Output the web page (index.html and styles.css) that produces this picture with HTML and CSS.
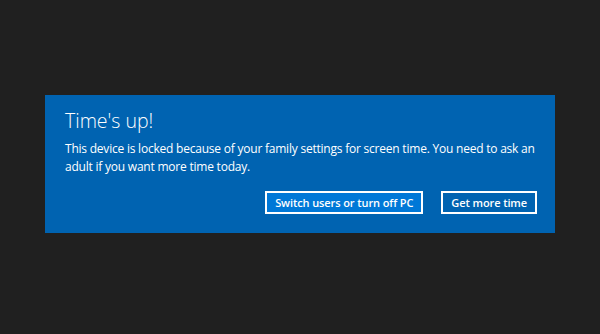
FILE: index.html
```html
<!DOCTYPE html>
<html lang="en">
<head>
    <meta charset="UTF-8">
    <title>Time's up</title>
    <link rel="stylesheet" href="styles.css">
</head>
<body>

<div class="dialog">
    <h1 class="dialog-title">Time's up!</h1>
    <p class="dialog-text">This device is locked because of your family settings for screen time. You need to ask an adult if you want more time today.</p>
    <div class="dialog-buttons">
        <button class="btn btn-focus">Switch users or turn off PC</button>
        <button class="btn">Get more time</button>
    </div>
</div>

</body>
</html>
```

FILE: styles.css
```css
html, body {
    height: 100%;
}
body {
    margin: 0;
    background-color: #202020;
    font-family: "Open Sans", "Noto Sans", sans-serif;
    display: flex;
    align-items: center;
    justify-content: center;
}
.dialog {
    box-sizing: border-box;
    width: 510px;
    height: 138px;
    margin-bottom: 6px;
    padding: 13px 18px 18px 20px;
    background-color: #0063b1;
    color: white;
}
.dialog-title {
    margin: 0;
    font-size: 19.5px;
    font-weight: 300;
    line-height: 26px;
}
.dialog-text {
    margin: 6px 0 0 0;
    font-size: 12px;
    letter-spacing: -0.22px;
    line-height: 18px;
}
.dialog-buttons {
    display: flex;
    justify-content: flex-end;
    gap: 18px;
    margin-top: 15px;
}
.btn {
    height: 23px;
    padding: 0 8px;
    border: 2px solid white;
    background-color: #0063b1;
    color: white;
    font-family: inherit;
    font-size: 11px;
    font-weight: 600;
    letter-spacing: -0.1px;
}
.btn-focus {
    background-color: #0078d7;
}
```
